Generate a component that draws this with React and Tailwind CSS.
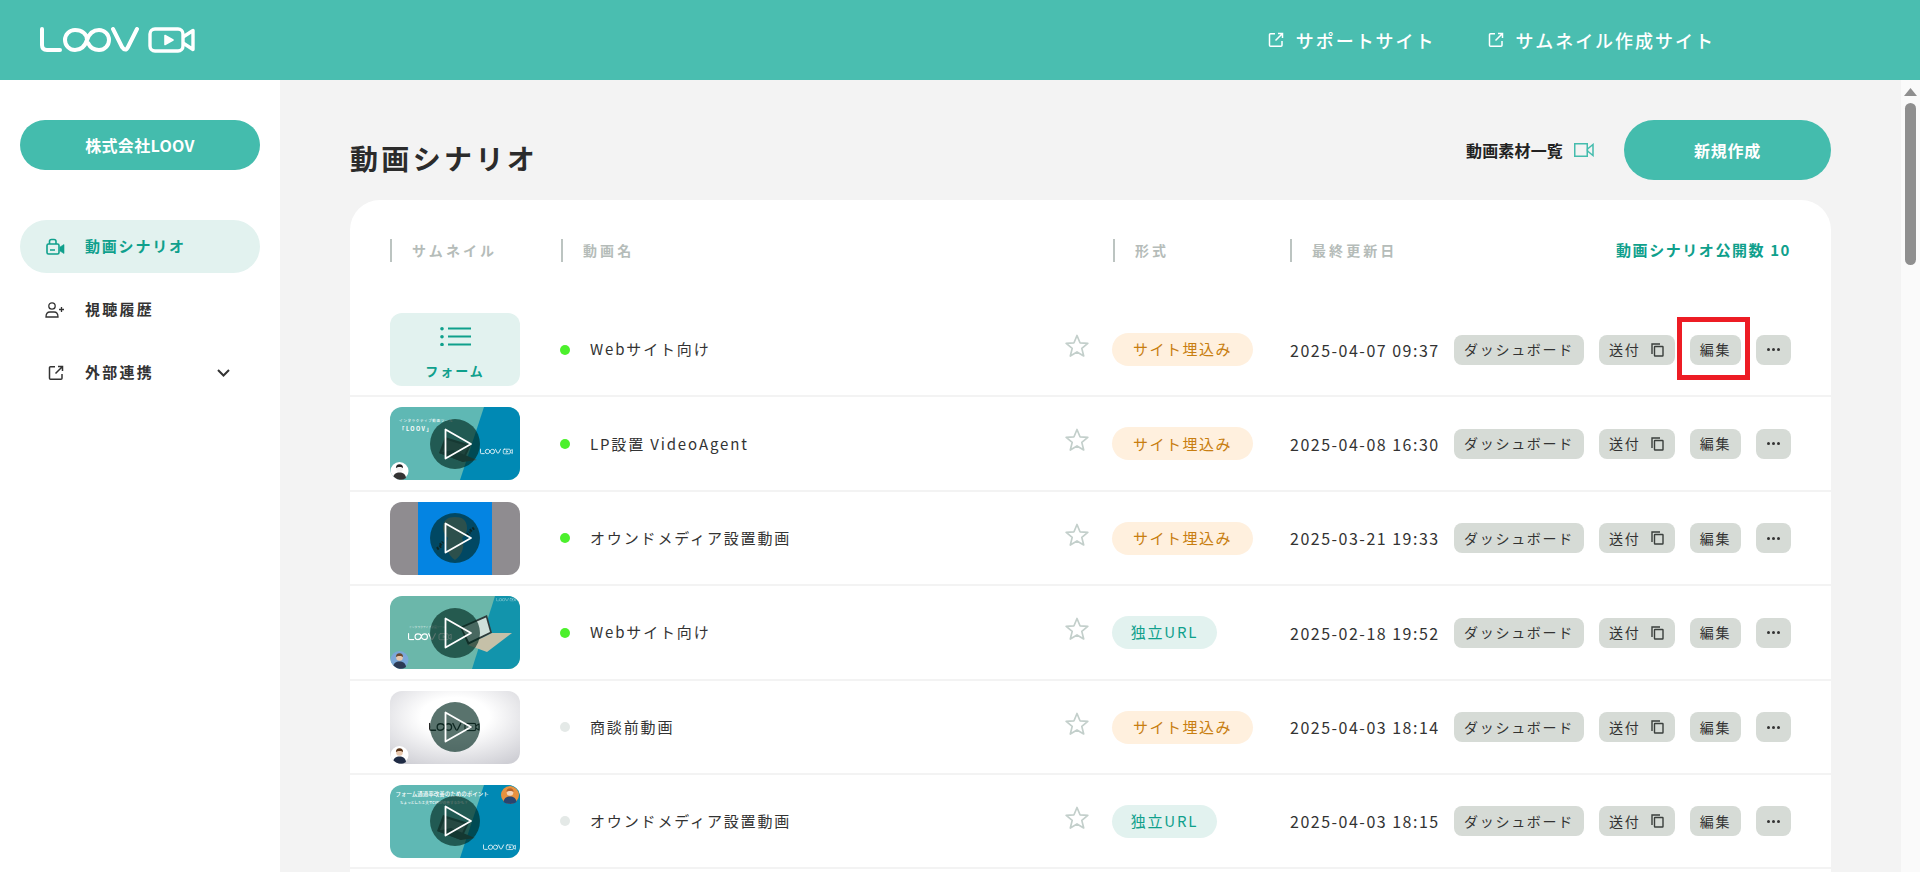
import React from "react";

const Logo = ({ color = "#fff", sw = 4, ...p }) => (
  <svg viewBox="0 0 156 26" fill="none" stroke={color} strokeWidth={sw} strokeLinecap="round" strokeLinejoin="round" {...p}>
    <path d="M2 2v16q0 5 5 5h13" />
    <path d="M47 13C47 7 42 3 35 3a10 10 0 0 0 0 20c6 0 10-4 12-10 2-6 6-10 12-10a10 10 0 0 1 0 20c-5 0-9-3-11-7" />
    <path d="M73 2l9 18q3.500 5 6 0l9-18" />
    <rect x="110" y="2" width="33" height="22" rx="5" strokeWidth={sw * 0.85} />
    <path d="M125 8.500l8 4.500-8 4.500z" fill={color} strokeWidth={sw * 0.4} />
    <path d="M143 10l10-6.500v19L143 16" strokeWidth={sw * 0.85} strokeLinecap="butt" />
  </svg>
);

const Ext = ({ className }) => (
  <svg viewBox="0 0 16 16" fill="none" stroke="currentColor" strokeWidth="1.5" className={className}>
    <path d="M7 1.750H2.500a1 1 0 0 0-1 1v10.500a1 1 0 0 0 1 1h10.500a1 1 0 0 0 1-1V9" />
    <path d="M7.500 8.500L14 2M10 1.500h4.500V6" />
  </svg>
);

const Star = () => (
  <svg viewBox="0 0 24 23" fill="none" stroke="#c3cfcb" strokeWidth="1.700" strokeLinejoin="round" className="w-6 h-[23px] -translate-y-1">
    <path d="M12 1.500l3 7.300 7.800.6-6 5 1.900 7.600L12 17.900 5.300 22l1.900-7.600-6-5 7.800-.6z" />
  </svg>
);

const Copy = () => (
  <svg viewBox="0 0 13 14" fill="none" stroke="#3a3f3c" strokeWidth="1.400" className="w-[13px] h-[14px]">
    <path d="M1 11V1h8" />
    <rect x="3.500" y="3.500" width="8.500" height="9.500" rx="0.500" />
  </svg>
);

const Play = () => (
  <div className="absolute left-10 top-[11.500px] w-[50px] h-[50px] rounded-full bg-[#00281e]/65 flex items-center justify-center">
    <svg viewBox="0 0 50 50" fill="none" stroke="#fff" strokeWidth="1.800" strokeLinejoin="round" className="w-[50px] h-[50px]">
      <path d="M15.500 10.500v29L41 25z" />
    </svg>
  </div>
);

const Avatar = ({ cx = 9.5, cy = 64, bg = "#fff", skin = "#e8c8ae", hair = "#2a2a2a", suit = "#2c3640" }) => (
  <g>
    <circle cx={cx} cy={cy} r="9" fill={bg} />
    <circle cx={cx} cy={cy - 2.500} r="3.300" fill={skin} />
    <path d={`M${cx - 3.600} ${cy - 3}a3.600 3.800 0 0 1 7.200 0c-1.500-1.500-5.500-1.500-7.200 0z`} fill={hair} />
    <path d={`M${cx - 6.500} ${cy + 7}c.5-4 3-5.500 6.500-5.500s6 1.500 6.500 5.500c-3 2.600-10 2.600-13 0z`} fill={suit} />
  </g>
);

const Laptop = ({ x = 0, y = 0, body = "#3f5a58", screen = "#5a7876" }) => (
  <g transform={`translate(${x} ${y})`}>
    <path d="M8 0l26 8-8 17-24-9z" fill={body} />
    <path d="M10 3l21 6.500-6 13L5 15z" fill={screen} />
    <path d="M2 16l24 9 14-2-24-10z" fill={body} />
  </g>
);

const T2 = () => (
  <svg viewBox="0 0 130 73" className="w-full h-full">
    <rect width="130" height="73" fill="#5fb8b4" />
    <path d="M94 0h36v73H70z" fill="#0089b4" />
    <text x="9" y="15" fontSize="3.600" fill="#fff" letterSpacing="0.600">インタラクティブ動画ツール</text>
    <text x="9" y="23.500" fontSize="5.500" fontWeight="700" fill="#fff" letterSpacing="1.400">「LOOV」</text>
    <Laptop x="47" y="30" />
    <Logo color="#fff" sw={4} x="90" y="41" width="33" height="7" />
    <Avatar suit="#333" hair="#222" skin="#f2f2f2" />
  </svg>
);

const T3 = () => (
  <svg viewBox="0 0 130 73" className="w-full h-full">
    <rect width="130" height="73" fill="#8f8c90" />
    <rect x="28" width="74" height="73" fill="#0484e2" />
    <path d="M53 26c0-8 5-11 12-11s12 3 12 11c0 5-3 8-5 10 3 6 1 17-7 22-8-5-10-16-7-22-2-2-5-5-5-10z" fill="#7f9aa0" />
    <path d="M47 47l4-3M50 43l3-3M80 29l4-3M77 33l3-3" stroke="#223" strokeWidth="3" strokeDasharray="2 1.200" />
  </svg>
);

const T4 = () => (
  <svg viewBox="0 0 130 73" className="w-full h-full">
    <rect width="130" height="73" fill="#6bb7aa" />
    <path d="M105 0h25v73H82z" fill="#1294ac" />
    <Logo color="#fff" sw={4} x="18" y="37" width="44" height="7.500" />
    <text x="19" y="32" fontSize="2.800" fill="#fff" opacity="0.700">インタラクティブ動画ツール</text>
    <Logo color="#cfeaea" sw={3} x="106" y="2" width="20" height="3.500" />
    <path d="M70 31l27-12 5 18-24 12z" fill="#2e3b3a" />
    <path d="M72 32l24-10.500 4 14.500-21 10z" fill="#cfe0da" />
    <path d="M78 49l24-12 20 0-25 19z" fill="#c5c0a8" />
    <Avatar bg="#7aa8d8" skin="#e8c8ae" hair="#6c4a30" suit="#2c3a54" />
  </svg>
);

const T5 = () => (
  <svg viewBox="0 0 130 73" className="w-full h-full">
    <defs>
      <radialGradient id="g5" cx="50%" cy="35%" r="75%">
        <stop offset="0.350" stopColor="#ffffff" />
        <stop offset="1" stopColor="#cfcfd5" />
      </radialGradient>
    </defs>
    <rect width="130" height="73" fill="url(#g5)" />
    <Logo color="#262626" sw={4} x="39" y="31.500" width="51" height="9" />
    <Avatar suit="#1f2b44" hair="#5a3418" />
  </svg>
);

const T6 = () => (
  <svg viewBox="0 0 130 73" className="w-full h-full">
    <rect width="130" height="73" fill="#5fb8b4" />
    <path d="M94 0h36v73H70z" fill="#0089b4" />
    <text x="5.500" y="11" fontSize="5.500" fontWeight="500" fill="#fff">フォーム通過率改善のためのポイント</text>
    <text x="10" y="19" fontSize="3.600" fontWeight="500" fill="#fff">ちょっとした工夫でCVRが改善するかも？</text>
    <Laptop x="45" y="30" body="#3a5553" screen="#6d8684" />
    <Logo color="#fff" sw={4} x="93" y="59" width="33" height="6.500" />
    <Avatar cx={120} cy={10} bg="#e8913f" skin="#f3d4b8" hair="#b5622a" suit="#29456f" />
  </svg>
);

const FormThumb = () => (
  <div className="h-full bg-[#e2f2ef] flex flex-col items-center">
    <svg viewBox="0 0 31 19" fill="#0fa08c" className="w-[31px] h-[19px] mt-[14px]">
      <circle cx="2" cy="1.800" r="1.800" />
      <circle cx="2" cy="9.800" r="1.800" />
      <circle cx="2" cy="17.500" r="1.800" />
      <rect x="8" y="0.500" width="23" height="2" />
      <rect x="8" y="8.500" width="23" height="2" />
      <rect x="8" y="16.500" width="23" height="2" />
    </svg>
    <span className="mt-4 text-[13px] leading-[18px] font-bold tracking-[2px] text-[#0fa08c]">フォーム</span>
  </div>
);

const rows = [
  { T: FormThumb, form: true, on: true, name: "Webサイト向け", badge: "site", date: "2025-04-07 09:37", mark: true },
  { T: T2, on: true, name: "LP設置 VideoAgent", badge: "site", date: "2025-04-08 16:30" },
  { T: T3, on: true, name: "オウンドメディア設置動画", badge: "site", date: "2025-03-21 19:33" },
  { T: T4, on: true, name: "Webサイト向け", badge: "url", date: "2025-02-18 19:52" },
  { T: T5, on: false, name: "商談前動画", badge: "site", date: "2025-04-03 18:14" },
  { T: T6, on: false, name: "オウンドメディア設置動画", badge: "url", date: "2025-04-03 18:15" },
];

const btn = "h-[30px] rounded-lg bg-[#d6dbd6] flex items-center text-[14px] tracking-[1.700px] text-[#333] shrink-0";

const Row = ({ T, form, on, name, badge, date, mark }) => (
  <div className="h-[94.400px] border-b-2 border-[#f3f3f3] px-10 pt-[10px] flex items-start">
    <div className="relative w-[130px] h-[73px] rounded-xl overflow-hidden shrink-0">
      <T />
      {!form && <Play />}
    </div>
    <div className="h-[73px] flex items-center ml-10 w-[505px] shrink-0">
      <span className={`w-[10px] h-[10px] rounded-full shrink-0 ${on ? "bg-[#4cf02c]" : "bg-[#e4e9e7]"}`} />
      <span className="ml-5 text-[15px] tracking-[1.850px] text-[#333] whitespace-nowrap">{name}</span>
    </div>
    <div className="h-[73px] w-[47px] flex items-center shrink-0"><Star /></div>
    <div className="h-[73px] w-[178px] flex items-center shrink-0">
      {badge === "site" ? (
        <span className="h-[33px] w-[141px] rounded-full bg-[#fff0de] text-[#c87e10] text-[15px] tracking-[0.1em] flex items-center justify-center">サイト埋込み</span>
      ) : (
        <span className="h-[33px] w-[105px] rounded-full bg-[#e2f2ef] text-[#0fa08c] text-[15px] tracking-[0.12em] flex items-center justify-center">独立URL</span>
      )}
    </div>
    <div className="h-[73px] w-[164px] flex items-center shrink-0 text-[16px] tracking-[1.500px] text-[#333] whitespace-nowrap">{date}</div>
    <div className="h-[73px] flex items-center gap-[15px]">
      <span className={`${btn} w-[130px] justify-center`}>ダッシュボード</span>
      <span className={`${btn} w-[76px] justify-between pl-[10px] pr-[11px]`}>送付<Copy /></span>
      <span className={`${btn} w-[51px] justify-center relative`}>
        編集
        {mark && <span className="absolute -left-[13px] -right-[9px] -top-[18px] -bottom-[15px] border-[5px] border-[#ed1c24]" />}
      </span>
      <span className={`${btn} w-[35px] justify-center`}>
        <svg viewBox="0 0 13 3" fill="#333" className="w-[13px] h-[3px]"><circle cx="1.500" cy="1.500" r="1.500" /><circle cx="6.500" cy="1.500" r="1.500" /><circle cx="11.500" cy="1.500" r="1.500" /></svg>
      </span>
    </div>
  </div>
);

const HeadCell = ({ w, children }) => (
  <div className={`${w} shrink-0 flex items-center`}>
    <span className="w-0.5 h-[23px] bg-[#bcc4c1]" />
    <span className="ml-5 text-[14px] font-bold tracking-[0.22em] text-[#b5bcb9]">{children}</span>
  </div>
);

export default function App() {
  return (
    <div className="h-screen overflow-hidden flex flex-col font-['Noto_Sans_CJK_JP',sans-serif] bg-white">
      <header className="h-20 shrink-0 bg-[#4abeb0] flex items-center justify-between pl-10 pr-[205px]">
        <Logo className="w-[156px] h-[26px]" />
        <nav className="flex items-center gap-[52px] text-white text-[18px] font-medium tracking-[0.11em]">
          <a className="flex items-center gap-3"><Ext className="w-4 h-4" />サポートサイト</a>
          <a className="flex items-center gap-3"><Ext className="w-4 h-4" />サムネイル作成サイト</a>
        </nav>
      </header>
      <div className="flex-1 min-h-0 flex">
        <aside className="w-[280px] shrink-0 bg-white px-5 pt-10">
          <div className="h-[50px] rounded-full bg-[#44bcad] text-white text-[16px] font-bold tracking-[0.02em] flex items-center justify-center">株式会社LOOV</div>
          <ul className="mt-[50px] flex flex-col gap-[10px] text-[15px] font-bold tracking-[0.15em] text-[#333]">
            <li className="h-[53px] rounded-full bg-[#e2f2ef] text-[#0fa08c] tracking-[0.12em] flex items-center pl-[25px]">
              <svg viewBox="0 0 20 17" fill="none" stroke="currentColor" strokeWidth="1.600" className="w-5 h-[17px]">
                <rect x="2" y="6" width="12" height="10" rx="1.500" />
                <path d="M4.500 6V3.500a2 2 0 0 1 2-2h2.500a2 2 0 0 1 2 2V6M5 12h5" />
                <path d="M15 9l4-2.500v9L15 13z" fill="currentColor" strokeWidth="0.600" />
              </svg>
              <span className="ml-5">動画シナリオ</span>
            </li>
            <li className="h-[53px] flex items-center pl-[25px]">
              <svg viewBox="0 0 20 16" fill="none" stroke="#333" strokeWidth="1.300" className="w-5 h-4">
                <circle cx="7" cy="4" r="3.200" />
                <path d="M1 15c0-3.500 1.500-5 4-5h4c2.500 0 4 1.500 4 5z" />
                <path d="M16.500 5v5M14 7.500h5" />
              </svg>
              <span className="ml-5">視聴履歴</span>
            </li>
            <li className="h-[53px] flex items-center pl-7 pr-[30px]">
              <Ext className="w-4 h-4" />
              <span className="ml-[21px]">外部連携</span>
              <svg viewBox="0 0 13 8" fill="none" stroke="#333" strokeWidth="2" className="ml-auto w-[13px] h-2"><path d="M1 1l5.500 5.500L12 1" /></svg>
            </li>
          </ul>
        </aside>
        <main className="flex-1 min-w-0 bg-[#f3f3f3] overflow-hidden px-[70px] pt-10">
          <div className="flex items-end justify-between">
            <h1 className="text-[28px] leading-[44px] font-bold tracking-[0.12em] text-[#2b2b2b]">動画シナリオ</h1>
            <div className="flex items-center">
              <span className="text-[16px] font-bold tracking-[0.01em] text-[#222]">動画素材一覧</span>
              <svg viewBox="0 0 20 14" fill="none" stroke="#44bcad" strokeWidth="1.500" className="ml-[11px] w-5 h-[14px]">
                <rect x="0.750" y="0.750" width="12.500" height="12.500" />
                <path d="M13.500 6l5.500-4.500v11L13.500 8z" />
              </svg>
              <span className="ml-[30px] w-[207px] h-[60px] rounded-full bg-[#44bcad] text-white text-[16px] font-bold tracking-[0.05em] flex items-center justify-center">新規作成</span>
            </div>
          </div>
          <section className="mt-5 bg-white rounded-[30px] pb-10">
            <div className="px-10 pb-[1px] flex items-end h-[103px]">
              <div className="flex items-center w-full h-[23px] mb-[40px]">
                <HeadCell w="w-[171px]">サムネイル</HeadCell>
                <HeadCell w="w-[552px]">動画名</HeadCell>
                <HeadCell w="w-[177px]">形式</HeadCell>
                <HeadCell w="w-[325px]">最終更新日</HeadCell>
                <span className="ml-auto text-[15px] font-bold tracking-[0.105em] text-[#0fa08c] whitespace-nowrap">動画シナリオ公開数 10</span>
              </div>
            </div>
            {rows.map((r, i) => <Row key={i} {...r} />)}
          </section>
        </main>
        <div className="w-[19px] shrink-0 bg-[#fafafa] flex flex-col items-center pt-2">
          <svg viewBox="0 0 13 8" fill="#8f8f8f" className="w-[13px] h-2"><path d="M6.500 0L13 8H0z" /></svg>
          <span className="mt-[7px] w-[11px] h-[162px] rounded-full bg-[#8f8f8f]" />
        </div>
      </div>
    </div>
  );
}
